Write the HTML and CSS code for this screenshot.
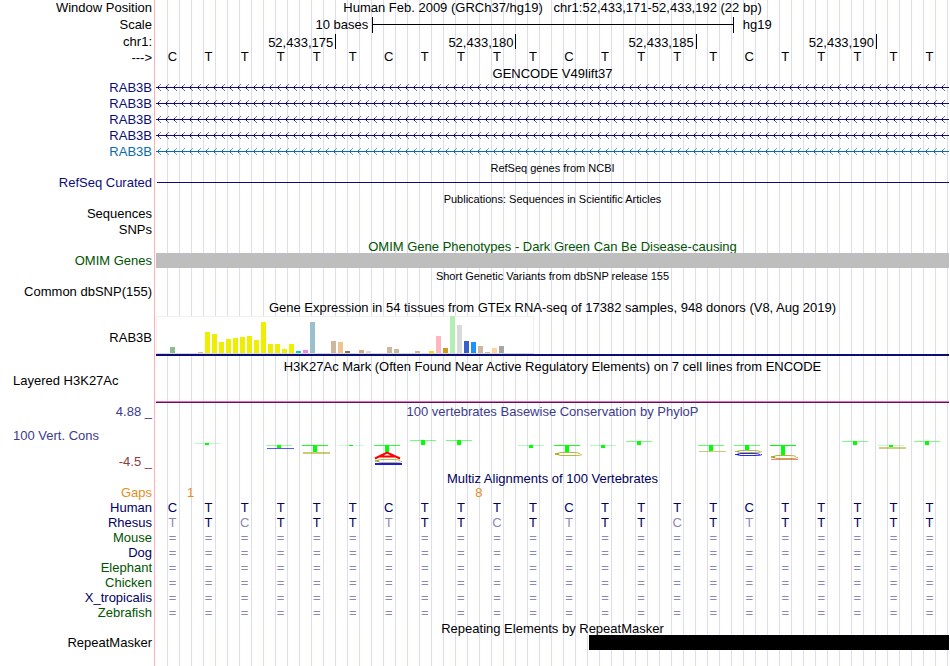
FILE: index.html
```
<!DOCTYPE html>
<html lang="en">
<head>
<meta charset="utf-8">
<title>Human chr1:52,433,171-52,433,192</title>
<link rel="stylesheet" href="styles.css">
</head>
<body>
<svg class="defs" aria-hidden="true">
  <defs>
    <pattern id="arrows" width="8" height="16" patternUnits="userSpaceOnUse">
      <path d="M1 7H3V6H2V9H3V8H1Z" fill="#0c0c78"/>
      <path d="M3 5H4V6H3ZM3 9H4V10H3ZM4 4H5V5H4ZM4 10H5V11H4Z" fill="#0c0c78" fill-opacity="0.6"/>
      <rect y="7" width="8" height="1" fill="#0c0c78"/>
    </pattern>
    <pattern id="arrows-light" width="8" height="16" patternUnits="userSpaceOnUse">
      <path d="M1 7H3V6H2V9H3V8H1Z" fill="#0c6ca8"/>
      <path d="M3 5H4V6H3ZM3 9H4V10H3ZM4 4H5V5H4ZM4 10H5V11H4Z" fill="#0c6ca8" fill-opacity="0.6"/>
      <rect y="7" width="8" height="1" fill="#0c6ca8"/>
    </pattern>
  </defs>
</svg>
<main class="tracks">
  <div class="row"><div class="label">Window Position</div><h1 class="title position">Human Feb. 2009 (GRCh37/hg19)   chr1:52,433,171-52,433,192 (22 bp)</h1></div>
  <div class="row"><div class="label">Scale</div><div class="plot scale"><span class="scale-text">10 bases</span><span class="scale-bar"></span><span class="assembly">hg19</span></div></div>
  <div class="row ruler-row"><div class="label">chr1:</div><div class="plot ruler"><span>52,433,175</span><span>52,433,180</span><span>52,433,185</span><span>52,433,190</span></div></div>
  <div class="row"><div class="label">---&gt;</div><div class="plot bases sequence" data-bases="CTTTTTCTTTTCTTTTCTTTTT"></div></div>

  <div class="row title-row gencode"><div class="label"></div><h2 class="title">GENCODE V49lift37</h2></div>
  <div class="row navy"><div class="label">RAB3B</div><svg class="plot gene"><rect width="100%" height="16" fill="url(#arrows)"/></svg></div>
  <div class="row navy"><div class="label">RAB3B</div><svg class="plot gene"><rect width="100%" height="16" fill="url(#arrows)"/></svg></div>
  <div class="row navy"><div class="label">RAB3B</div><svg class="plot gene"><rect width="100%" height="16" fill="url(#arrows)"/></svg></div>
  <div class="row navy"><div class="label">RAB3B</div><svg class="plot gene"><rect width="100%" height="16" fill="url(#arrows)"/></svg></div>
  <div class="row blue"><div class="label">RAB3B</div><svg class="plot gene"><rect width="100%" height="16" fill="url(#arrows-light)"/></svg></div>

  <div class="row title-row"><div class="label"></div><h2 class="title small">RefSeq genes from NCBI</h2></div>
  <div class="row navy"><div class="label">RefSeq Curated</div><svg class="plot gene"><rect x="1" y="7" width="100%" height="1" fill="#0c0c78"/></svg></div>

  <div class="row title-row"><div class="label"></div><h2 class="title small">Publications: Sequences in Scientific Articles</h2></div>
  <div class="row"><div class="label">Sequences</div><div class="plot"></div></div>
  <div class="row"><div class="label">SNPs</div><div class="plot"></div></div>

  <div class="row title-row green"><div class="label"></div><h2 class="title">OMIM Gene Phenotypes - Dark Green Can Be Disease-causing</h2></div>
  <div class="row compact green"><div class="label">OMIM Genes</div><div class="plot omim-bar"></div></div>

  <div class="row"><div class="label"></div><h2 class="title small">Short Genetic Variants from dbSNP release 155</h2></div>
  <div class="row"><div class="label">Common dbSNP(155)</div><div class="plot"></div></div>

  <div class="row"><div class="label"></div><h2 class="title">Gene Expression in 54 tissues from GTEx RNA-seq of 17382 samples, 948 donors (V8, Aug 2019)</h2></div>
  <div class="row gtex"><div class="label">RAB3B</div><div class="plot expression"><svg id="gtex" width="378" height="38" role="img" aria-label="Expression by tissue"><rect x="0.500" y="0.500" width="377" height="37" fill="#fff" stroke="#f0f0f0"/><rect y="37" width="378" height="1" fill="#d8d8d8"/></svg></div></div>

  <div class="row h3k-title"><div class="label"></div><h2 class="title">H3K27Ac Mark (Often Found Near Active Regulatory Elements) on 7 cell lines from ENCODE</h2></div>
  <div class="row h3k"><div class="label left">Layered H3K27Ac</div><div class="plot signal"></div></div>

  <div class="row phylo-title slate"><div class="label">4.88 _</div><h2 class="title">100 vertebrates Basewise Conservation by PhyloP</h2></div>
  <div class="row phylo slate"><div class="label limits"><span class="name">100 Vert. Cons</span><span class="maroon">-4.5 _</span></div><svg id="phylo" class="plot" viewBox="0 0 793 50" preserveAspectRatio="none" role="img" aria-label="Conservation logo"></svg></div>

  <div class="row title-row deep"><div class="label"></div><h2 class="title">Multiz Alignments of 100 Vertebrates</h2></div>
  <div class="row compact orange"><div class="label">Gaps</div><div class="plot gaps"><span class="gap-first">1</span><span class="gap-second">8</span></div></div>
  <div class="row compact deep"><div class="label">Human</div><div class="plot bases" data-bases="CTTTTTCTTTTCTTTTCTTTTT"></div></div>
  <div class="row compact deep"><div class="label">Rhesus</div><div class="plot bases" data-bases="tTcTTTtTTcTtTTcTtTTTTT"></div></div>
  <div class="row compact green"><div class="label">Mouse</div><div class="plot bases" data-bases="======================"></div></div>
  <div class="row compact deep"><div class="label">Dog</div><div class="plot bases" data-bases="======================"></div></div>
  <div class="row compact green"><div class="label">Elephant</div><div class="plot bases" data-bases="======================"></div></div>
  <div class="row compact green"><div class="label">Chicken</div><div class="plot bases" data-bases="======================"></div></div>
  <div class="row compact deep"><div class="label">X_tropicalis</div><div class="plot bases" data-bases="======================"></div></div>
  <div class="row compact green"><div class="label">Zebrafish</div><div class="plot bases" data-bases="======================"></div></div>

  <div class="row title-row"><div class="label"></div><h2 class="title">Repeating Elements by RepeatMasker</h2></div>
  <div class="row compact"><div class="label">RepeatMasker</div><div class="plot repeats"><span class="repeat"></span></div></div>
</main>
<script src="script.js"></script>
</body>
</html>
```
FILE: styles.css
```
* {
  box-sizing: border-box;
}

body {
  margin: 0;
  background: #fff;
  color: #000;
  font: 13px/16px "Liberation Sans", Arial, sans-serif;
}

.defs {
  position: absolute;
  width: 0;
  height: 0;
}

/* Red divider and base guidelines run behind every track. */
.tracks {
  min-height: 100vh;
  margin-right: 1px;
  background:
    linear-gradient(#ffb0b0, #ffb0b0) 154px 0 / 1px 100% no-repeat,
    linear-gradient(#fff, #fff) 0 0 / 156px 100% no-repeat,
    linear-gradient(to right, #dcdcf8 1px, transparent 1px) 167px 0 / 12px 100%;
}

.row {
  display: grid;
  grid-template-columns: 152px minmax(0, 1fr);
  column-gap: 4px;
}

.label {
  text-align: right;
  white-space: nowrap;
}

.label.left {
  padding-left: 13px;
  text-align: left;
}

.title {
  margin: 0;
  font-size: 13px;
  font-weight: normal;
  text-align: center;
  white-space: pre;
}

.title.small {
  font-size: 11px;
}

.plot {
  width: 100%;
}

.title-row {
  padding-top: 2px;
  line-height: 13px;
}

.gencode {
  padding-top: 1px;
}

.compact {
  line-height: 15px;
}

/* Twenty-two equal columns, one for each base. */
.scale,
.ruler,
.bases,
.gaps {
  display: grid;
  grid-template-columns: repeat(22, minmax(0, 1fr));
}

.scale {
  padding-top: 1px;
}

.scale-text {
  grid-column: 1 / span 6;
  padding-right: 4px;
  text-align: right;
}

.scale-bar {
  grid-column: 7 / span 10;
  margin-right: -1px;
  border: solid #000;
  border-width: 0 1px;
  background: linear-gradient(#000, #000) 0 7px / 100% 1px no-repeat;
}

.assembly {
  grid-column: 17 / span 6;
  padding-left: 10px;
}

.row:nth-child(2) .label {
  padding-top: 1px;
}

.ruler-row {
  padding-top: 1px;
  line-height: 16px;
}

.ruler span {
  grid-column: span 5;
  height: 15px;
  padding-right: 2px;
  border-right: 1px solid #000;
  line-height: 17px;
  text-align: right;
}

.bases span,
.gaps span {
  padding-right: 3px;
  text-align: center;
}

.sequence {
  line-height: 13px;
}

.faded {
  color: #8888b8;
}

.gap-first {
  grid-column: 1 / span 2;
}

.gap-second {
  grid-column: 9 / span 2;
}

.gene {
  display: block;
  height: 16px;
}

.omim-bar {
  background: #bebebe;
}

.gtex .label {
  align-self: center;
  padding-top: 4px;
}

.expression {
  border-bottom: 2px solid #0c0c78;
}

.expression svg {
  display: block;
}

.h3k-title {
  padding: 3px 0 0;
}

.h3k {
  padding-bottom: 1px;
  line-height: 12px;
}

.signal {
  height: 28px;
  border-bottom: 1px solid #601060;
  box-shadow: inset 0 -1px #e070b8;
}

.limits {
  display: flex;
  flex-direction: column;
  justify-content: space-between;
  padding-top: 8px;
}

.limits .name {
  padding-left: 13px;
  text-align: left;
}

#phylo {
  display: block;
  height: 50px;
}

.repeats {
  display: flex;
  justify-content: flex-end;
}

.repeat {
  width: calc(100% * 10 / 22);
  background: #000;
}

.navy { color: #0c0c78; }
.blue { color: #0c6ca8; }
.green { color: #005400; }
.slate { color: #3c3c8c; }
.maroon { color: #8c3c3c; }
.deep { color: #000060; }
.orange { color: #e88c1c; }
```
FILE: script.js
```
// Base letters: lower case marks a mismatch, "=" an unalignable base.
document.querySelectorAll("[data-bases]").forEach((row) => {
  for (const base of row.dataset.bases) {
    const cell = document.createElement("span");
    cell.textContent = base.toUpperCase();
    if (base === "=" || base !== base.toUpperCase()) cell.className = "faded";
    row.append(cell);
  }
});

function draw(parent, tag, attributes) {
  const node = document.createElementNS("http://www.w3.org/2000/svg", tag);
  for (const [name, value] of Object.entries(attributes)) node.setAttribute(name, value);
  parent.append(node);
}

// Tissue bars: slot, height, colour.
const tissues = [
  [0, 6, "#8fbc8f"], [4, 1, "#cdb79e"], [5, 21, "#eeee00"], [6, 19, "#eeee00"],
  [7, 11, "#eeee00"], [8, 14, "#eeee00"], [9, 15, "#eeee00"], [10, 16, "#eeee00"],
  [11, 17, "#eeee00"], [12, 13, "#eeee00"], [13, 31, "#eeee00"], [14, 9, "#eeee00"],
  [15, 9, "#eeee00"], [16, 4, "#eeee00"], [17, 9, "#eeee00"], [18, 2, "#00cdcd"],
  [19, 3, "#ee82ee"], [20, 31, "#9ac0cd"], [23, 12, "#cdb79e"], [24, 11, "#eec591"],
  [25, 2, "#8b7355"], [27, 3, "#cdaa7d"], [28, 2, "#eed5d2"], [31, 6, "#cdb79e"],
  [32, 4, "#cdb79e"], [35, 2, "#cdb79e"], [37, 2, "#ffd700"], [38, 17, "#ffb6c1"],
  [39, 5, "#cd9b1d"], [40, 37, "#b4eeb4"], [41, 28, "#d9d9d9"], [42, 12, "#3a5fcd"],
  [43, 11, "#1e90ff"], [44, 7, "#cdb79e"], [45, 1, "#cdb79e"], [46, 5, "#ffd39b"],
  [47, 7, "#a6a6a6"]
];
const gtex = document.getElementById("gtex");
for (const [slot, height, fill] of tissues) {
  draw(gtex, "rect", { x: 14 + slot * 7, y: 37 - height, width: 5, height, fill });
}

// Conservation logo: base index, top, stem height, strength of the T crossbar.
const phylo = document.getElementById("phylo");
const stems = [
  [1, 23, 2, 0.25], [3, 25, 3, 0.4], [4, 25, 7, 0.9], [5, 25, 1, 0.2],
  [6, 25, 7, 0.8], [7, 20, 5, 0.55], [8, 20, 5, 0.55], [10, 25, 3, 0.3],
  [11, 25, 7, 0.9], [12, 25, 3, 0.3], [13, 21, 4, 0.5], [15, 25, 6, 0.6],
  [16, 25, 5, 0.6], [17, 25, 10, 1], [19, 21, 4, 0.5], [20, 25, 2, 0.25],
  [21, 21, 4, 0.5]
];
for (const [base, y, height, strength] of stems) {
  const x = 2 + base * 36;
  draw(phylo, "rect", { x, y, width: 26, height: 1, fill: "#00ff00", "fill-opacity": strength });
  draw(phylo, "rect", { x: x + 11, y, width: 4, height, fill: "#00ff00" });
}

// Flattened letters below the stems: base index, top, height, colour, opacity.
const rounds = [
  [3, 28, 1, "#0000ff", 0.65], [4, 32, 2, "#a0a000", 0.55], [6, 39, 4, "#a0a000", 0.7],
  [6, 43, 2, "#0000ff", 0.9], [11, 32, 4, "#a0a000", 0.75], [15, 31, 1, "#a0a000", 0.55],
  [16, 30, 3, "#a0a000", 0.75], [16, 33, 3, "#0000ff", 0.85], [17, 35, 4, "#a0a000", 0.8],
  [17, 39, 1, "#ff0000", 0.5], [20, 27, 2, "#a0a000", 0.5]
];
for (const [base, y, height, color, opacity] of rounds) {
  const x = 3 + base * 36;
  if (height < 3) {
    draw(phylo, "path", { d: `M${x} ${y + height / 2}H${x + 27}`, stroke: color, "stroke-width": height, "stroke-opacity": opacity });
  } else {
    const b = y + height - 0.5;
    draw(phylo, "path", {
      d: `M${x + 25} ${y + 1.5}Q${x + 24} ${y + 0.5} ${x + 18} ${y + 0.5}H${x + 6}Q${x - 2} ${(y + 0.5 + b) / 2} ${x + 6} ${b}H${x + 20}Q${x + 26} ${b} ${x + 27} ${b - 1}`,
      fill: "none", stroke: color, "stroke-opacity": opacity
    });
    draw(phylo, "rect", { x, y: y + 1, width: 4, height: height - 2, fill: color, "fill-opacity": opacity });
  }
}
draw(phylo, "path", { d: "M219 38.500L231 32.500L244 38.500M223 36.500H240", fill: "none", stroke: "#ff0000", "stroke-width": 2 });
```
